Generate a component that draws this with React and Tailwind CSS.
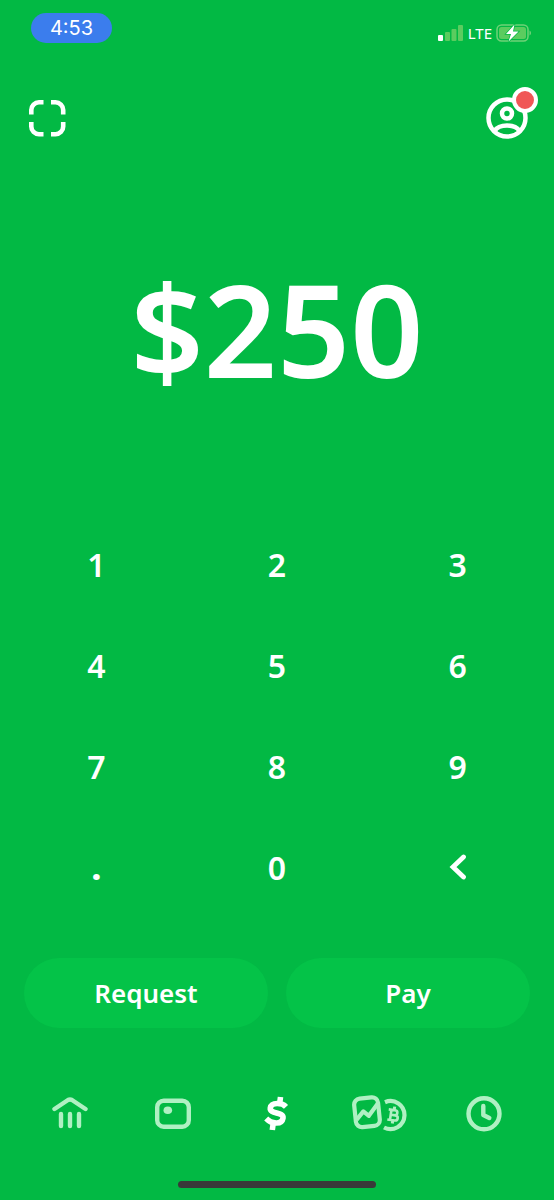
import React, { useState } from 'react';

const keys = ['1', '2', '3', '4', '5', '6', '7', '8', '9', '.', '0', '<'];

const StatusBar = () => (
  <div className="flex items-start justify-between pl-[31px] pr-[22px] pt-[13px] h-14">
    <div className="w-[81px] h-[30px] rounded-full bg-[#3b7ded] flex items-center justify-center font-['Inter',sans-serif] text-xl">
      4:53
    </div>
    <div className="flex items-center gap-1 pt-[10px]">
      <svg width="26" height="18" viewBox="0 0 26 18" fill="#fff">
        <rect x="0" y="11" width="5" height="6" rx="1" />
        <g fill="#5bcc5f">
          <rect x="7" y="8" width="5" height="9" rx="1" />
          <rect x="13.5" y="5" width="5" height="12" rx="1" />
          <rect x="20" y="1" width="5" height="16" rx="1" />
        </g>
      </svg>
      <span className="text-[15px] leading-5">LTE</span>
      <svg width="36" height="20" viewBox="0 0 36 20">
        <rect x="1" y="2" width="31" height="16" rx="4.5" fill="none" stroke="#6fd277" strokeWidth="1.5" />
        <rect x="3" y="4" width="27" height="12" rx="2.5" fill="#5bcc5f" />
        <path d="M33.5 7.5c2 .8 2 4.2 0 5z" fill="#6fd277" />
        <path d="M18.5 1.5 10 11h5l-2.500 7.500L22.500 8.500h-5.500z" fill="#fff" stroke="#02b944" strokeWidth="1.5" paintOrder="stroke" />
      </svg>
    </div>
  </div>
);

const ScanIcon = () => (
  <svg width="38" height="38" viewBox="0 0 38 38" fill="none" stroke="#fff" strokeWidth="4.6">
    <path d="M3.3 15.5V11a7.700 7.700 0 0 1 7.700-7.700h4.500M23 3.300h4.500a7.700 7.700 0 0 1 7.700 7.700v4.500M35.200 23v4.500a7.700 7.700 0 0 1-7.700 7.700H23M15.500 35.200H11a7.700 7.700 0 0 1-7.700-7.700V23" />
  </svg>
);

const ProfileIcon = () => (
  <svg width="42" height="42" viewBox="0 0 42 42" fill="none" stroke="#fff" strokeWidth="4.5">
    <circle cx="21" cy="21" r="18.5" />
    <circle cx="21" cy="16.5" r="5" />
    <path d="M8.500 34c2.500-4 7.500-5.500 12.500-5.500s10 1.500 12.500 5.500" />
  </svg>
);

const BankIcon = () => (
  <svg width="36" height="36" viewBox="0 0 36 36" fill="none" stroke="currentColor" strokeWidth="4.4" strokeLinecap="round" strokeLinejoin="round">
    <path d="M2.500 13 16 4q2-1.200 4 0l13.500 9M9 18v12M18 18v12M27 18v12" />
  </svg>
);

const CardIcon = () => (
  <svg width="36" height="36" viewBox="0 0 36 36">
    <rect x="2.200" y="4.700" width="31.600" height="26" rx="6.500" fill="none" stroke="currentColor" strokeWidth="4.400" />
    <ellipse cx="12.800" cy="14.300" rx="4.300" ry="3.800" fill="currentColor" />
  </svg>
);

const DollarIcon = () => (
  <svg width="36" height="36" viewBox="0 0 36 36" fill="none" stroke="currentColor" strokeWidth="5.600">
    <path d="M27 10.800C23.500 7 12.500 5.500 11.300 12 10.200 18.500 25.200 15.500 24 22.200 22.800 29 12.500 28 7.200 22.500" />
    <path d="M20.600 8 21.500 1M13.300 34l1-7.500" />
  </svg>
);

const InvestIcon = () => (
  <svg width="58" height="38" viewBox="0 0 58 38" fill="none" stroke="currentColor" strokeLinejoin="round">
    <g transform="rotate(-6 15 17.500)" strokeWidth="4.200">
      <rect x="3" y="3" width="24" height="28.500" rx="6" />
      <path d="M4 23.500l7.500-7.500 5 5 10-11" />
    </g>
    <path d="M33 7.200a14 14 0 1 1-1 25.300" strokeWidth="4.200" />
    <g transform="rotate(8 41 20)" strokeWidth="2.600">
      <path d="M36 15h6.500a2.400 2.400 0 0 1 0 5H39h4.500a2.600 2.600 0 0 1 0 5.200H36M38.700 15v10.200" />
      <path d="M41.500 11.500V15M41.500 25v3.500" strokeWidth="3" />
    </g>
  </svg>
);

const ClockIcon = () => (
  <svg width="36" height="36" viewBox="0 0 36 36" fill="none" stroke="currentColor" strokeWidth="4.400" strokeLinecap="round" strokeLinejoin="round">
    <circle cx="18" cy="17.800" r="15.500" />
    <path d="M17.300 10v9l6 3" />
  </svg>
);

const tabs = [
  { name: 'Banking', icon: BankIcon },
  { name: 'Card', icon: CardIcon },
  { name: 'Payments', icon: DollarIcon },
  { name: 'Investing', icon: InvestIcon },
  { name: 'Activity', icon: ClockIcon },
];

const App = () => {
  const [amount, setAmount] = useState('250');
  const [active, setActive] = useState('Payments');

  const press = (key) => {
    if (key === '<') {
      setAmount(amount.slice(0, -1) || '0');
    } else if (key === '.') {
      if (!amount.includes('.')) setAmount(amount + '.');
    } else {
      setAmount(amount === '0' ? key : amount + key);
    }
  };

  return (
    <div className="min-h-screen flex flex-col bg-[#02b944] text-white font-['Noto_Sans',sans-serif]">
      <StatusBar />

      {/* Header */}
      <header className="flex items-center justify-between pl-7 pr-[26px] pt-[41px]">
        <button aria-label="Scan">
          <ScanIcon />
        </button>
        <button aria-label="Profile" className="relative">
          <ProfileIcon />
          <span className="absolute -top-[10px] -right-[10px] w-[26px] h-[26px] rounded-full border-4 border-white bg-[#f05656]"></span>
        </button>
      </header>

      {/* Amount */}
      <main className="flex-1 flex items-center justify-center pt-1">
        <h1 className="text-[128px] leading-none font-semibold">${amount}</h1>
      </main>

      {/* Keypad */}
      <div className="grid grid-cols-3 gap-y-px px-1.5">
        {keys.map((key) => (
          <button
            key={key}
            onClick={() => press(key)}
            aria-label={key === '<' ? 'Delete' : key}
            className={`h-[100px] flex items-center justify-center text-[32px] ${key === '.' ? 'font-black' : 'font-semibold'}`}
          >
            {key === '<' ? (
              <svg width="18" height="28" viewBox="0 0 18 28" fill="none" stroke="#fff" strokeWidth="4.800" strokeLinecap="round">
                <path d="M14.500 3 4 13l10.500 10" strokeLinejoin="miter" />
              </svg>
            ) : (
              key
            )}
          </button>
        ))}
      </div>

      <div className="grid grid-cols-2 gap-[18px] px-6 mt-10">
        <button className="h-[70px] rounded-full bg-[#04c348] text-[26px] font-semibold">Request</button>
        <button className="h-[70px] rounded-full bg-[#04c348] text-[26px] font-semibold">Pay</button>
      </div>

      {/* Bottom tabs */}
      <nav className="grid grid-cols-5 px-[18px] mt-[58px]">
        {tabs.map(({ name, icon: Icon }) => (
          <button
            key={name}
            aria-label={name}
            onClick={() => setActive(name)}
            className={`h-14 flex items-center justify-center ${active === name ? 'text-white' : 'text-[#b0f0c3]'}`}
          >
            <Icon />
          </button>
        ))}
      </nav>

      <div className="flex justify-center mt-[39px] pb-3">
        <div className="w-[198px] h-[7px] rounded-full bg-[#393939]"></div>
      </div>
    </div>
  );
};

export default App;
